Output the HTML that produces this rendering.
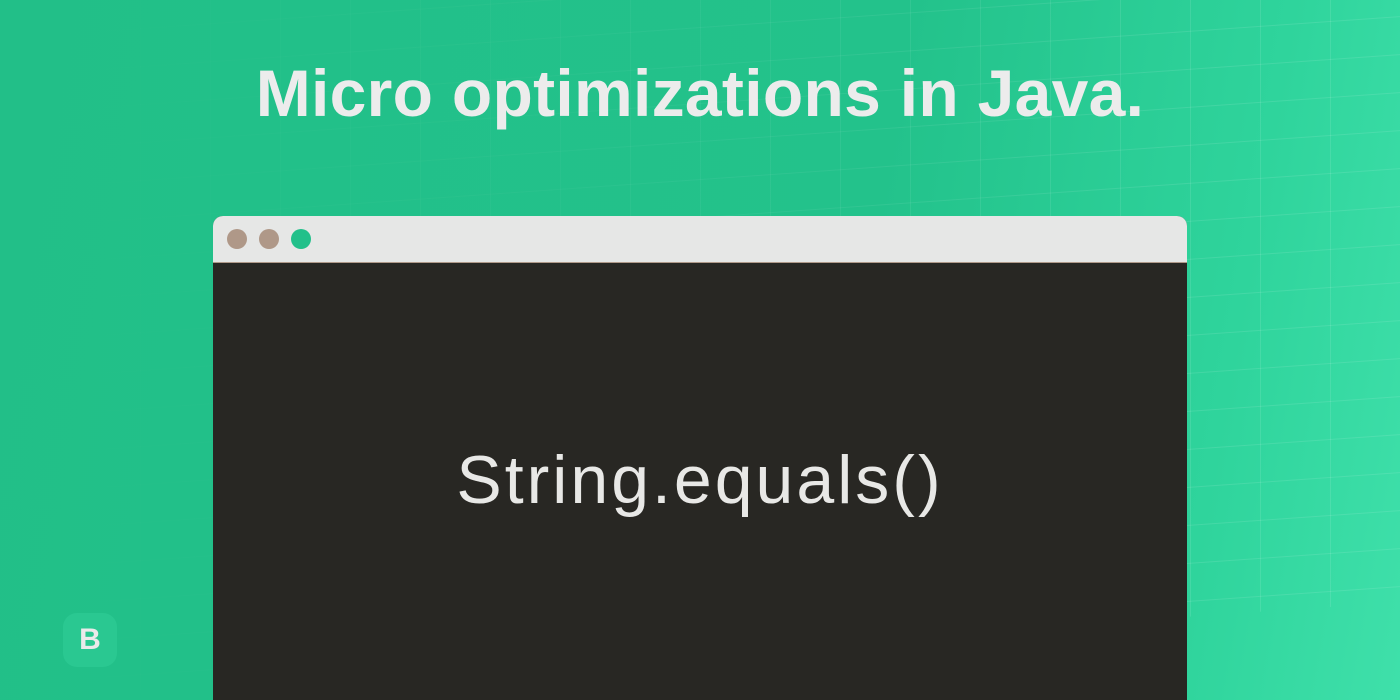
<!DOCTYPE html>
<html><head><meta charset="utf-8"><style>
html,body{margin:0;padding:0}
body{width:1400px;height:700px;overflow:hidden;position:relative;
background:linear-gradient(100deg,#22bf88 0%,#23c28b 60%,#2fd49c 85%,#3fe0aa 100%);font-family:"Liberation Sans",sans-serif}
.grid{position:absolute;inset:0;
background-image:linear-gradient(rgba(255,255,255,.10) 1px,transparent 1px),linear-gradient(90deg,rgba(255,255,255,.10) 1px,transparent 1px);
background-size:70px 38px;transform:skewY(-4deg);transform-origin:0 0;
-webkit-mask-image:linear-gradient(90deg,transparent 0%,rgba(0,0,0,.3) 40%,#000 85%)}
h1{position:absolute;top:55px;left:0;width:1400px;text-align:center;margin:0;color:#ececec;font-size:66px;font-weight:bold;letter-spacing:0.3px}
.win{position:absolute;left:213px;top:216px;width:974px;height:484px;background:#282723;border-radius:10px 10px 0 0;overflow:hidden}
.bar{height:46px;background:#e6e7e6;border-bottom:1px solid #b09a8a}
.dot{position:absolute;top:13px;width:20px;height:20px;border-radius:50%}
.code{position:absolute;top:225px;left:0;width:974px;text-align:center;color:#e8e8e6;font-size:68px;letter-spacing:3px}
.b{position:absolute;left:63px;top:613px;width:54px;height:54px;border-radius:14px;background:#2ac891;color:#eaeaea;font-weight:bold;font-size:30px;text-align:center;line-height:54px}
</style></head><body>
<div class="grid"></div>
<h1>Micro optimizations in Java.</h1>
<div class="win"><div class="bar"></div>
<div class="dot" style="left:14px;background:#af9888"></div>
<div class="dot" style="left:46px;background:#af9888"></div>
<div class="dot" style="left:78px;background:#22c08a"></div>
<div class="code">String.equals()</div>
</div>
<div class="b">B</div>
</body></html>
